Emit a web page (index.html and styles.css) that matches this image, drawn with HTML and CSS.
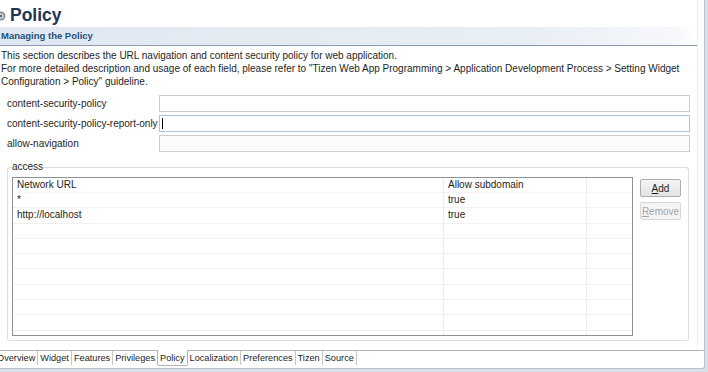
FILE: index.html
```html
<!DOCTYPE html>
<html lang="en">
<head>
  <meta charset="UTF-8">
  <title>Policy</title>
  <link rel="stylesheet" href="styles.css">
</head>
<body>

  <div class="frame">
    <div class="form">
      <h1 class="title">
        <svg class="title-icon" width="10" height="10" viewBox="0 0 10 10">
          <circle cx="5" cy="5" r="4.5" fill="#8d949c"/>
          <circle cx="5" cy="5" r="2.6" fill="#d7dce1"/>
          <circle cx="5" cy="5" r="1.2" fill="#5d6670"/>
        </svg>
        Policy
      </h1>

      <div class="section-head">Managing the Policy</div>
      <p class="desc">
        This section describes the URL navigation and content security policy for web application.<br>
        For more detailed description and usage of each field, please refer to "Tizen Web App Programming &gt; Application Development Process &gt; Setting Widget
        Configuration &gt; Policy" guideline.
      </p>

      <div class="fields">
        <div class="field">
          <label>content-security-policy</label>
          <span class="input-wrap"><input type="text"></span>
        </div>
        <div class="field">
          <label>content-security-policy-report-only</label>
          <span class="input-wrap focused"><input type="text"></span>
        </div>
        <div class="field">
          <label>allow-navigation</label>
          <span class="input-wrap"><input type="text" class="soft"></span>
        </div>
      </div>

      <fieldset class="access">
        <legend>access</legend>
        <div class="access-body">
          <div class="table">
            <div class="row head">
              <div class="cell">Network URL</div>
              <div class="cell">Allow subdomain</div>
              <div class="cell"></div>
            </div>
            <div class="row">
              <div class="cell">*</div>
              <div class="cell">true</div>
              <div class="cell"></div>
            </div>
            <div class="row">
              <div class="cell">http://localhost</div>
              <div class="cell">true</div>
              <div class="cell"></div>
            </div>
            <div class="row"><div class="cell"></div><div class="cell"></div><div class="cell"></div></div>
            <div class="row"><div class="cell"></div><div class="cell"></div><div class="cell"></div></div>
            <div class="row"><div class="cell"></div><div class="cell"></div><div class="cell"></div></div>
            <div class="row"><div class="cell"></div><div class="cell"></div><div class="cell"></div></div>
            <div class="row"><div class="cell"></div><div class="cell"></div><div class="cell"></div></div>
            <div class="row"><div class="cell"></div><div class="cell"></div><div class="cell"></div></div>
            <div class="row"><div class="cell"></div><div class="cell"></div><div class="cell"></div></div>
            <div class="row"><div class="cell"></div><div class="cell"></div><div class="cell"></div></div>
          </div>
          <div class="buttons">
            <button class="btn"><u>A</u>dd</button>
            <button class="btn" disabled><u>R</u>emove</button>
          </div>
        </div>
      </fieldset>
    </div>

    <div class="tabbar">
      <span class="tab first">Overview</span>
      <span class="tab">Widget</span>
      <span class="tab">Features</span>
      <span class="tab">Privileges</span>
      <span class="tab active">Policy</span>
      <span class="tab">Localization</span>
      <span class="tab">Preferences</span>
      <span class="tab">Tizen</span>
      <span class="tab">Source</span>
    </div>
  </div>

</body>
</html>
```

FILE: styles.css
```css
* {
  box-sizing: border-box;
  margin: 0;
  padding: 0;
}

body {
  width: 708px;
  height: 372px;
  overflow: hidden;
  background-color: #d8e0e7;
  font-family: "Liberation Sans", Arial, sans-serif;
  font-size: 10px;
  color: #1e1e1e;
}

/* Editor frame */
.frame {
  width: 705px;
  height: 369px;
  background: #fff;
  border-right: 1px solid #b7c2cc;
  border-bottom: 1px solid #b7c2cc;
  border-bottom-right-radius: 3px;
  display: flex;
  flex-direction: column;
  overflow: hidden;
}

.form {
  width: 698px;
  height: 351px;
  border-right: 1px solid #edf0f3;
  display: flex;
  flex-direction: column;
}

/* Title */
.title {
  height: 27px;
  padding-top: 2px;
  line-height: 20px;
  font-size: 17.5px;
  font-weight: bold;
  color: #1f3553;
  display: flex;
  align-items: center;
  align-self: flex-start;
}

.title-icon {
  margin-left: -4px;
  margin-right: 4px;
  margin-top: 3px;
}

/* Section */
.section-head {
  height: 19px;
  padding-left: 1px;
  line-height: 18px;
  font-size: 9.5px;
  font-weight: bold;
  color: #23507e;
  background: linear-gradient(to right, #dfe7f0, #e8eef5 75%, #f6f8fb 97%, #fff);
  border-bottom: 1px solid #8a9bb0;
}

.desc {
  padding: 3px 1px 0;
  line-height: 13px;
  width: 690px;
}

/* Fields */
.fields {
  margin-top: 7px;
  display: flex;
  flex-direction: column;
  gap: 3px;
}

.field {
  display: flex;
  align-items: center;
  height: 17px;
  padding-left: 7px;
}

.field label {
  width: 152px;
  white-space: nowrap;
}

.input-wrap {
  position: relative;
  display: block;
}

.input-wrap input {
  display: block;
  width: 531px;
  height: 17px;
  border: 1px solid #cdcdcd;
  background: #fff;
  font: inherit;
  padding: 0 3px;
  outline: none;
}

.input-wrap input.soft {
  background: #fcfcfc;
}

.input-wrap.focused input {
  border-color: #9fcadb;
}

.input-wrap.focused::after {
  content: "";
  position: absolute;
  left: 3px;
  top: 3px;
  width: 1px;
  height: 11px;
  background: #000;
}

/* Access group */
.access {
  margin: 9px 0 0 7px;
  width: 682px;
  height: 180px;
  border: 1px solid #dddddd;
  border-radius: 3px;
  padding: 4px 6px 4px 4px;
}

.access legend {
  line-height: 12px;
  padding: 0;
  color: #222;
}

.access-body {
  display: flex;
  gap: 7px;
  align-items: flex-start;
}

.table {
  width: 621px;
  height: 159px;
  border: 1px solid #8d9095;
  overflow: hidden;
}

.row {
  display: grid;
  grid-template-columns: 431px 143px 1fr;
  height: 15.3px;
  border-bottom: 1px solid #f1f1f1;
}

.row.head {
  height: 15px;
  border-bottom-color: #f4f4f4;
}

.cell {
  padding-left: 4px;
  line-height: 14px;
  white-space: nowrap;
  border-right: 1px solid #ececec;
}

.cell:last-child {
  border-right: none;
}

.buttons {
  display: flex;
  flex-direction: column;
  gap: 5px;
  padding-top: 2px;
}

.btn {
  width: 41px;
  height: 18px;
  border: 1px solid #adadad;
  border-radius: 2px;
  background: linear-gradient(#f5f5f5, #e4e4e4);
  font: inherit;
  color: #1e1e1e;
}

.btn:disabled {
  border-color: #d8d8d8;
  background: #f4f4f4;
  color: #a6a6a6;
}

/* Bottom tabs */
.tabbar {
  height: 18px;
  border-top: 1px solid #b3b3b3;
  display: flex;
  align-items: flex-start;
}

.tab {
  height: 14px;
  line-height: 14px;
  padding: 0 2px;
  font-size: 9.2px;
  color: #1e1e1e;
  border-right: 1px solid #c6c6c6;
  white-space: nowrap;
}

.tab.first {
  margin-left: -5px;
}

.tab.active {
  height: 16px;
  margin-top: -1px;
  padding-top: 1px;
  background: #fff;
  border-left: 1px solid #b3b3b3;
  border-right: 1px solid #b3b3b3;
  border-bottom: 1px solid #b3b3b3;
  border-radius: 0 0 2px 2px;
  margin-left: -1px;
}
```
